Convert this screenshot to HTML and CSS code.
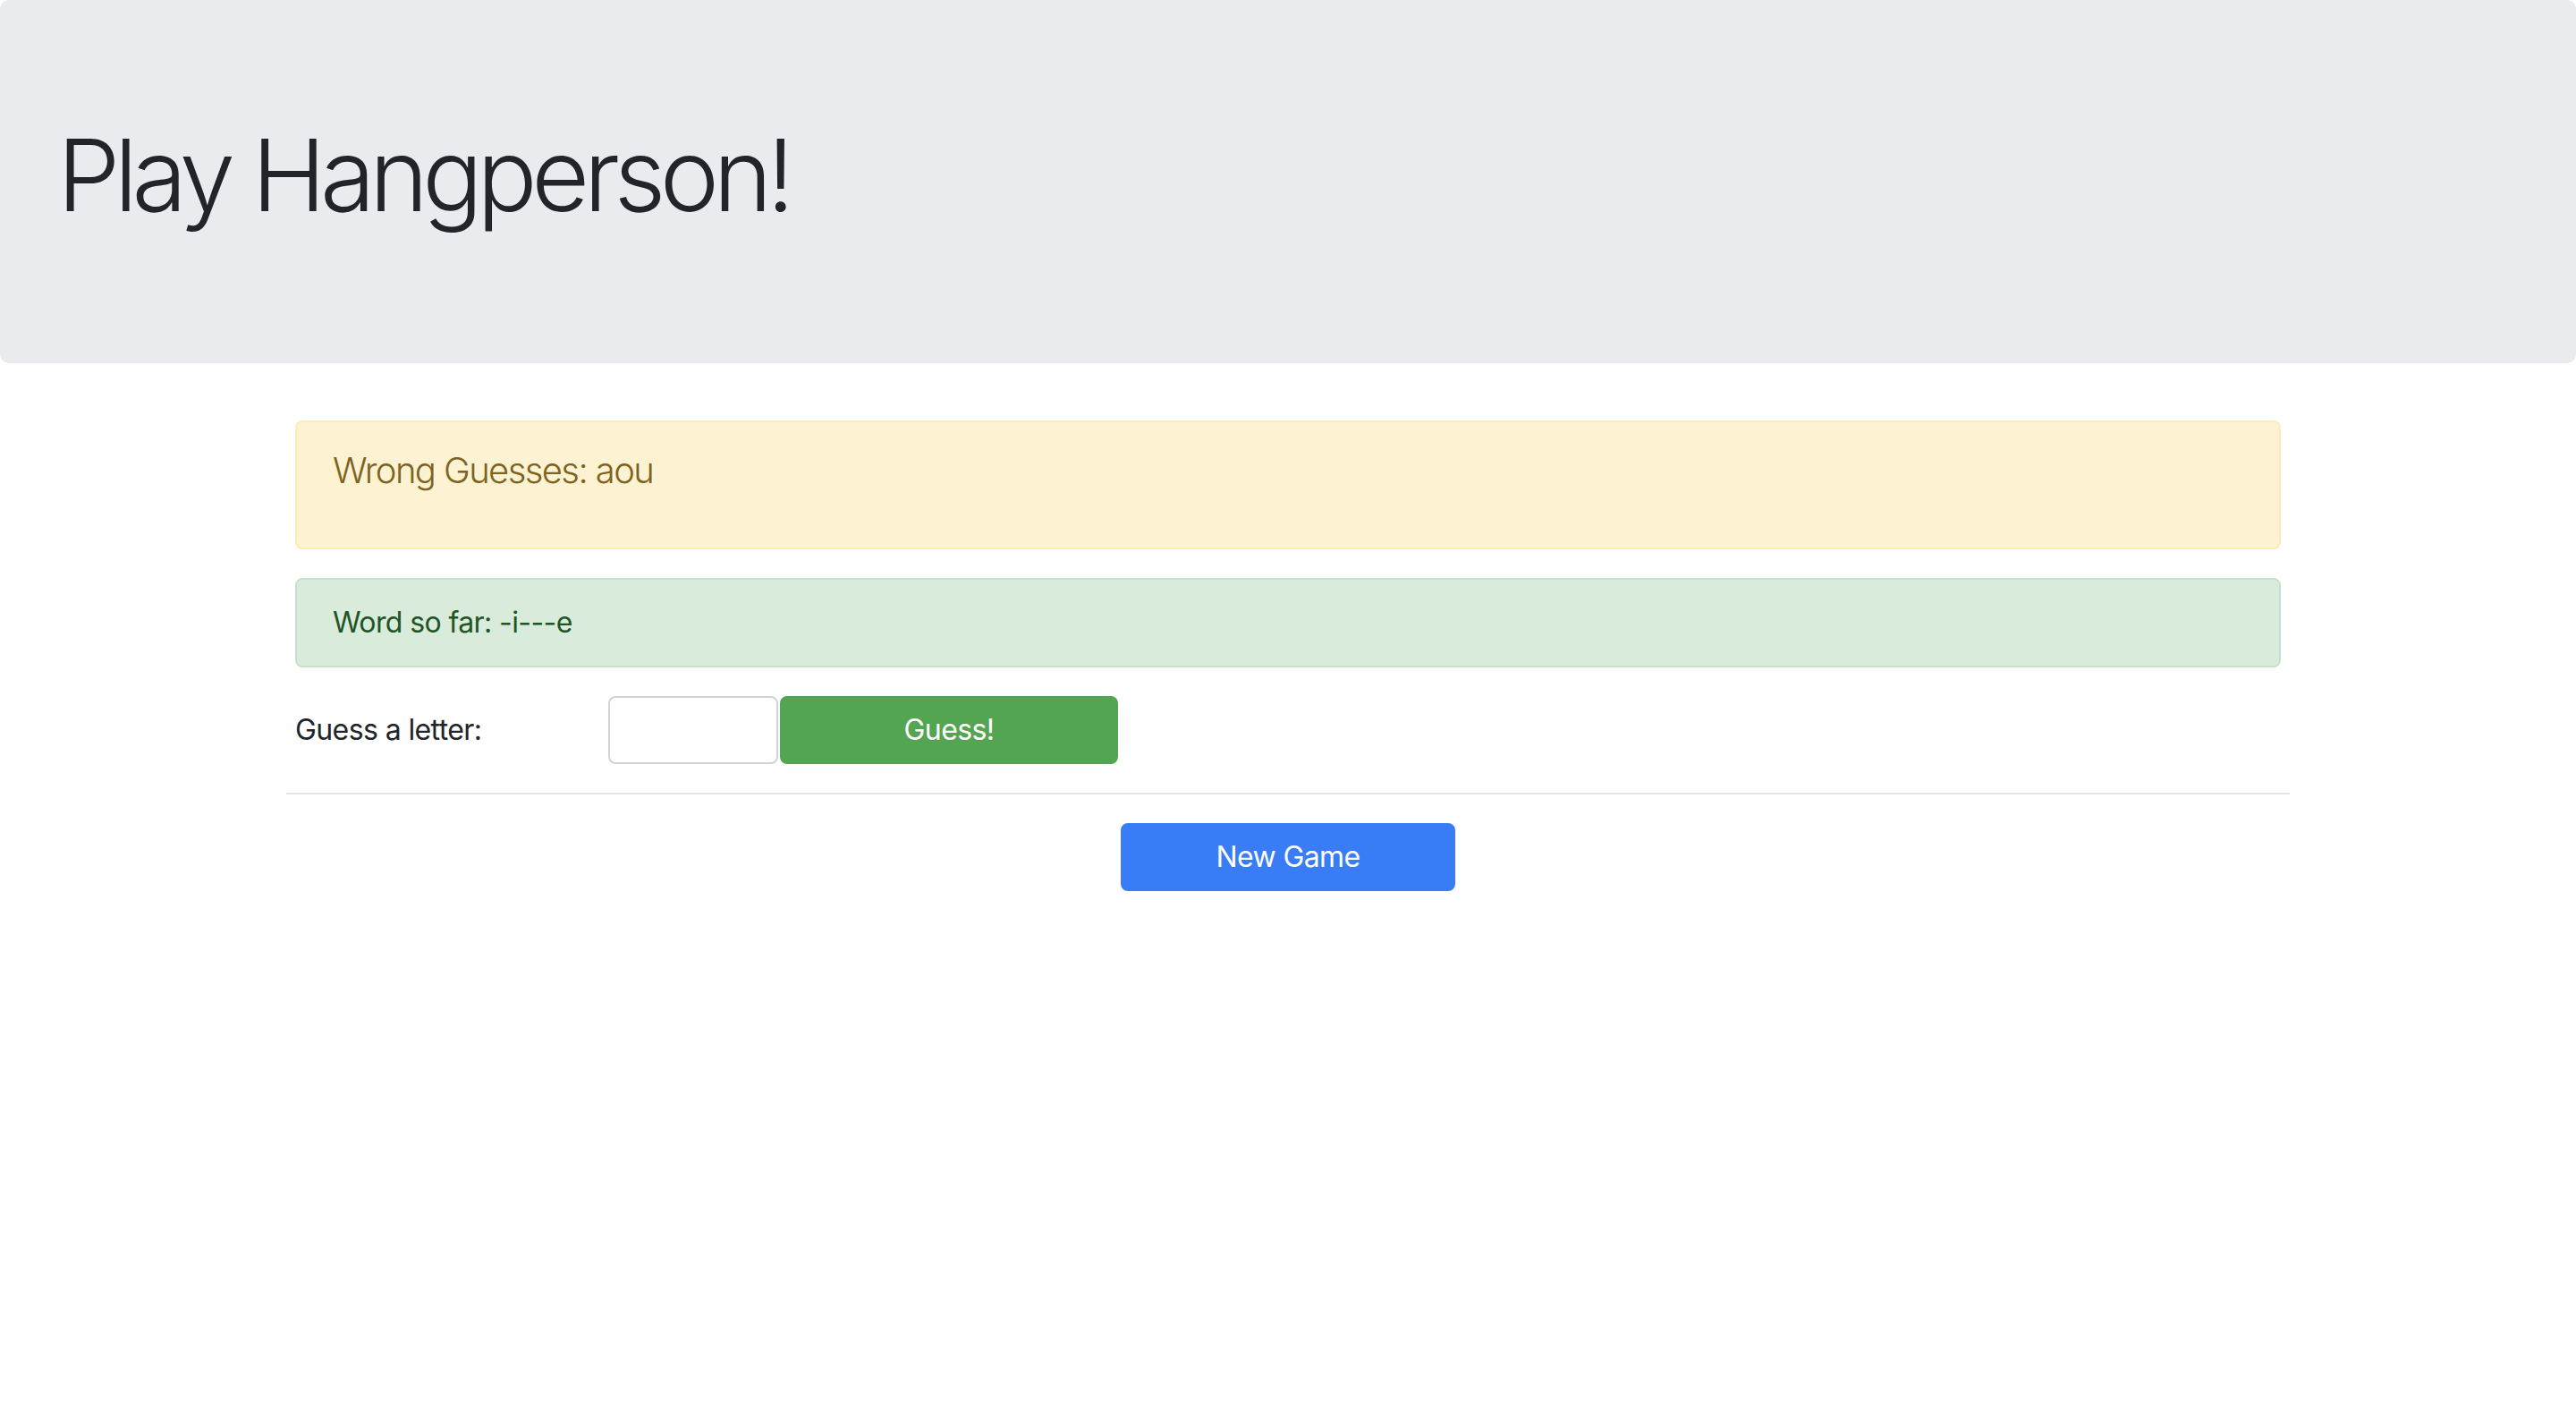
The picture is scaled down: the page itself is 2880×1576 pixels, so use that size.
FILE: index.html
```html
<!DOCTYPE html>
<html lang="en">
<head>
<meta charset="utf-8">
<title>Hangperson</title>
<link rel="stylesheet" href="styles.css">
</head>
<body>
<div class="jumbotron">
  <h1 class="display">Play Hangperson!</h1>
</div>
<div class="container">
  <div class="alert alert-warn">
    <p class="lead">Wrong Guesses: aou</p>
  </div>
  <div class="alert alert-ok">Word so far: -i---e</div>
  <form class="guess-row">
    <label class="guess-label" for="guess">Guess a letter:</label>
    <input class="guess-input" id="guess" type="text">
    <button class="btn btn-success" type="button">Guess!</button>
  </form>
  <hr class="divider">
  <div class="center">
    <button class="btn btn-primary" type="button">New Game</button>
  </div>
</div>
</body>
</html>
```

FILE: styles.css
```css
html, body {
  margin: 0;
  padding: 0;
  background: #ffffff;
}
body {
  font-family: Inter, "Noto Sans", "Liberation Sans", sans-serif;
  font-size: 32px;
  line-height: 1.5;
  letter-spacing: -0.6px;
  color: #212529;
}
.jumbotron {
  background: #eaebef;
  padding: 128px 64px;
  margin-bottom: 64px;
  border-radius: 10px;
}
.display {
  margin: 0 0 16px 0;
  font-size: 112px;
  font-weight: 300;
  line-height: 1.2;
  letter-spacing: -6.5px;
  color: #212529;
}
.container {
  width: 2220px;
  margin: 0 auto;
}
.alert {
  border: 2px solid transparent;
  border-radius: 8px;
  padding: 24px 40px;
  margin-bottom: 32px;
}
.alert-warn {
  background: #fdf2d1;
  border-color: #fdecbb;
  color: #7d6220;
}
.alert-ok {
  background: #d9ebda;
  border-color: #c6e2cb;
  color: #1f5526;
}
.lead {
  margin: 0 0 32px 0;
  font-size: 40px;
  font-weight: 300;
  line-height: 1.5;
  letter-spacing: -1.6px;
}
.guess-row {
  display: flex;
  align-items: center;
  margin: 0;
}
.guess-label {
  width: 350px;
}
.guess-input {
  box-sizing: border-box;
  width: 190px;
  height: 76px;
  border: 2px solid #ced4da;
  border-radius: 8px;
  background: #ffffff;
  font: inherit;
  padding: 12px 24px;
  margin: 0;
}
.btn {
  box-sizing: border-box;
  height: 76px;
  border: 2px solid transparent;
  border-radius: 8px;
  font: inherit;
  letter-spacing: -0.6px;
  color: #ffffff;
  padding: 12px 24px;
  margin: 0;
}
.btn-success {
  width: 378px;
  background: #53a552;
  border-color: #53a552;
  margin-left: 2px;
}
.btn-primary {
  width: 374px;
  background: #387cf6;
  border-color: #387cf6;
}
.divider {
  margin: 32px -10px;
  border: 0;
  border-top: 2px solid #e3e4e6;
  height: 0;
}
.center {
  display: flex;
  justify-content: center;
}
```
